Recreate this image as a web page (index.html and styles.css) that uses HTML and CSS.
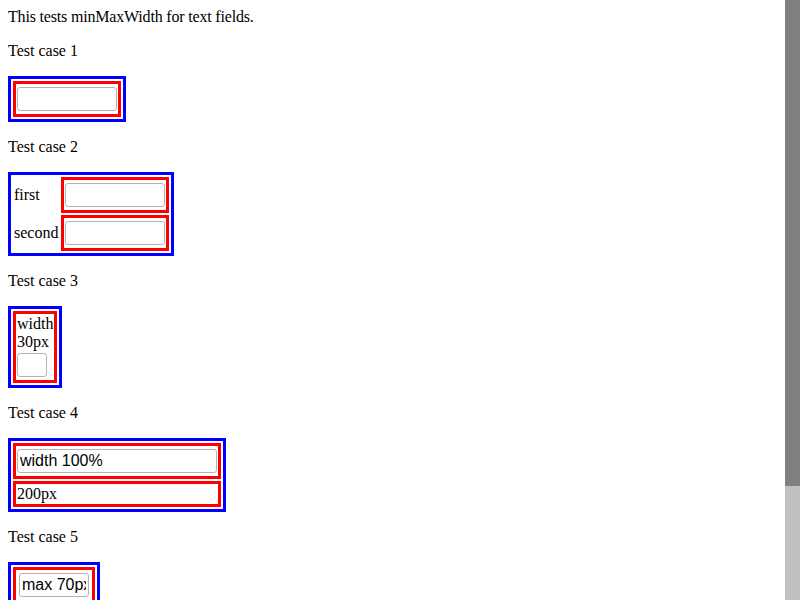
FILE: index.html
```html
<!DOCTYPE html>
<html>
<head>
<meta charset="utf-8">
<link rel="stylesheet" href="styles.css">
</head>
<body>
<span class="intro">This tests minMaxWidth for text fields.</span>
<p>Test case 1</p>
<table class="outer">
  <tr><td class="cell"><input class="field w100" type="text"></td></tr>
</table>
<p>Test case 2</p>
<table class="outer">
  <tr><td class="label">first</td><td class="cell"><input class="field w100" type="text"></td></tr>
  <tr><td class="label">second</td><td class="cell"><input class="field w100" type="text"></td></tr>
</table>
<p>Test case 3</p>
<table class="outer shrink">
  <tr><td class="cell">width 30px <input class="field w30" type="text"></td></tr>
</table>
<p>Test case 4</p>
<table class="outer">
  <tr><td class="cell"><input class="field full" type="text" size="1" value="width 100%"></td></tr>
  <tr><td class="cell"><div class="box200">200px</div></td></tr>
</table>
<p>Test case 5</p>
<table class="outer">
  <tr><td class="cell"><input class="field max70" type="text" value="max 70px"></td></tr>
</table>
<p>Test case 6</p>
<table class="outer">
  <tr><td class="cell"><input class="field w100" type="text"></td></tr>
</table>
<div class="scrollbar"><div class="thumb"></div></div>
</body>
</html>
```
FILE: styles.css
```css
html {
  background: #fff;
}
body {
  margin: 8px;
  font-family: "Liberation Serif", "Times New Roman", serif;
  font-size: 16px;
  color: #000;
  padding-bottom: 55px;
}
.intro {
  letter-spacing: -0.18px;
}
p {
  margin: 16px 0;
}
.outer {
  border: 3px solid #0000ff;
  border-spacing: 2px;
  border-collapse: separate;
}
.shrink {
  width: 1px;
}
.cell {
  border: 3px solid #ff0000;
  padding: 1px;
}
.label {
  padding: 1px;
}
.field {
  box-sizing: border-box;
  font-family: "Liberation Sans", Arial, sans-serif;
  font-size: 16px;
  height: 24px;
  margin: 2px 0;
  padding: 1px 2px;
  border: 1px solid #b4b4b4;
  border-radius: 3px;
  background: #fff;
  color: #000;
  outline: none;
}
.w100 {
  width: 100px;
}
.w30 {
  width: 30px;
}
.full {
  width: 100%;
}
.max70 {
  width: 70px;
  margin: 2px 2px;
}
.box200 {
  width: 200px;
}
.scrollbar {
  position: fixed;
  top: 0;
  right: 0;
  width: 15px;
  height: 600px;
  background: #c0c0c0;
}
.thumb {
  height: 486px;
  background: #808080;
}
```
